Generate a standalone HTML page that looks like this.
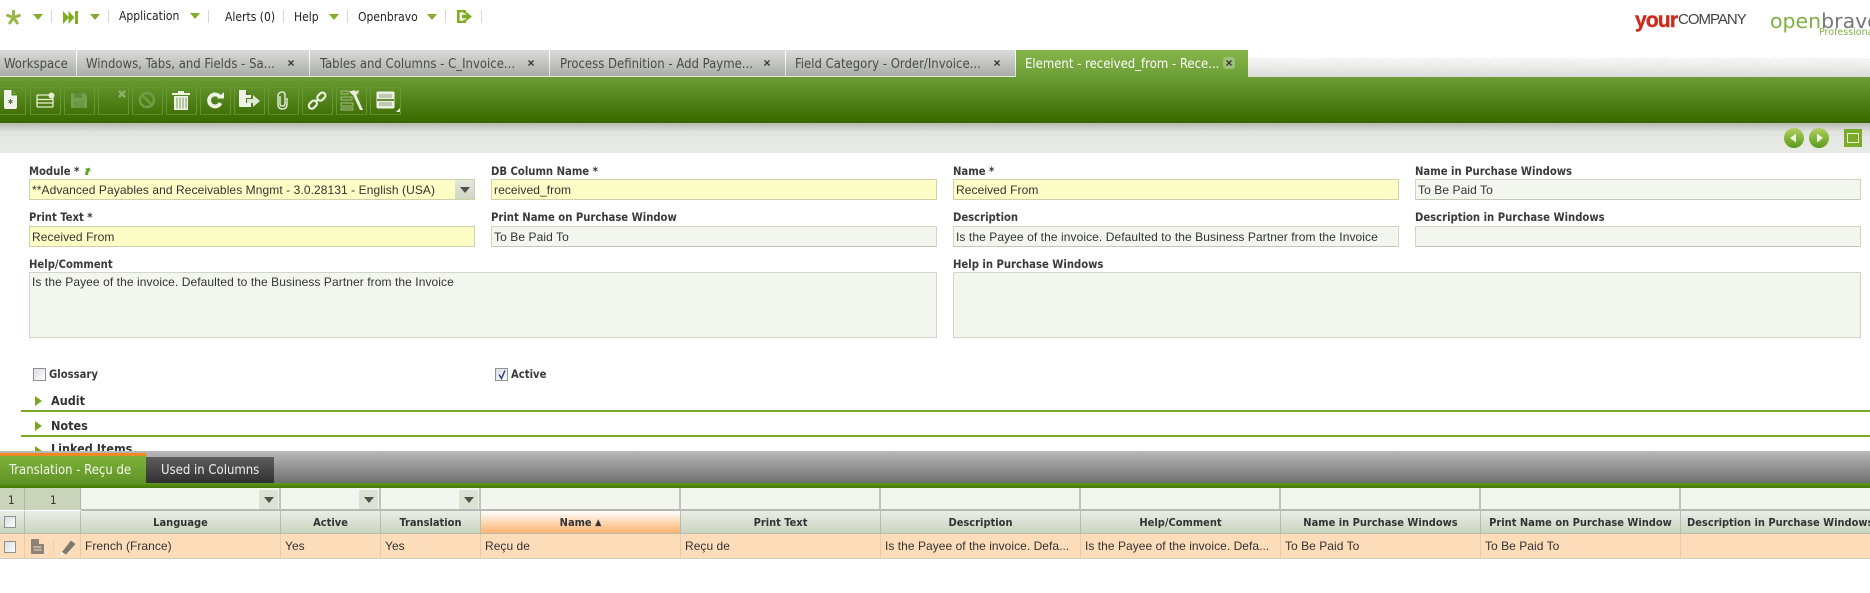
<!DOCTYPE html>
<html><head><meta charset="utf-8"><title>Element</title>
<style>
html,body{margin:0;padding:0;background:#fff}
#p{position:relative;width:1870px;height:593px;overflow:hidden;background:#fff;font-family:"DejaVu Sans Condensed","DejaVu Sans","Liberation Sans",sans-serif;font-stretch:condensed;color:#333}
#p div,#p span.a,#p svg{position:absolute}
.t{white-space:nowrap}
.nav{font-size:12px;color:#222;line-height:14px;height:14px;white-space:nowrap}
.sep{width:1px;top:10px;height:13px;background:#d8d8d8}
.tab{top:50px;height:26px;background:linear-gradient(#dcdcda,#a9aca6);border-bottom:1px solid #e6e8e2}
.tabt{top:56px;height:17px;line-height:17px;font-size:13px;color:#4a4a4a;white-space:nowrap}
.x{top:57px;width:12px;height:12px;font:bold 12px/12px "Liberation Sans",sans-serif;text-align:center;color:#333}
.btn{top:87px;height:26px;width:29px;border:1px solid #659832;border-bottom-color:#5c8c2c}
.lb{font-size:11.2px;font-weight:bold;color:#3a3a3a;line-height:16px;height:16px;white-space:nowrap}
.in{box-sizing:border-box;height:21px;border:1px solid #d2d6c4;border-bottom:1px solid #c4c8b8;font:12px/21px "Liberation Sans",sans-serif;letter-spacing:.08px;color:#333;padding-left:2px;white-space:nowrap;overflow:hidden}
.y{background:#fdfdc6;border-color:#cfd2a8}
.r{background:#f3f6ef}
.sec{font-size:12.5px;font-weight:bold;color:#333;line-height:16px;height:16px;white-space:nowrap}
.tri{width:0;height:0;border-left:7px solid #7aa824;border-top:5.5px solid transparent;border-bottom:5.5px solid transparent}
.gl{left:21px;right:0;height:2px;background:#7aa824}
.f{top:488px;height:21px;background:#f3f5ef;border-bottom:2px solid #b7bab0;border-right:2px solid #c0c3ba;box-sizing:content-box}
.h{top:511px;height:22px;background:linear-gradient(#ebede8,#c9d4bf);border-right:1px solid #b6bfad;border-bottom:1px solid #b7bdac;font-size:11px;font-weight:bold;color:#333;line-height:24px;text-align:center;white-space:nowrap;overflow:hidden}
.c{top:534px;height:24px;background:#fddcb9;border-right:1px solid #e4ccb0;border-bottom:1px solid #cfcdbd;font:12px/25px "Liberation Sans",sans-serif;letter-spacing:.04px;color:#333;white-space:nowrap;overflow:hidden;padding-left:4px;box-sizing:content-box}
.fb{top:490px;width:19px;height:19px;background:#dde2d5}
.ar{width:0;height:0;border-left:5px solid transparent;border-right:5px solid transparent;border-top:6px solid #4d5348}
.gar{width:0;height:0;border-left:5px solid transparent;border-right:5px solid transparent;border-top:6px solid #82ac2c}
.cb{box-sizing:border-box;width:12px;height:12px;border:1px solid #8e938e;background:linear-gradient(135deg,#d9dde4,#fff)}
</style></head><body>
<div id="p">

<!-- top bar -->
<svg style="left:5px;top:9px" width="17" height="17" viewBox="0 0 17 17"><g stroke="#9ab84a" stroke-width="3" stroke-linecap="round"><path d="M8.5 8.5V2.2M8.5 8.5L2.6 6.4M8.5 8.5L14.4 6.4M8.5 8.5L4.8 14M8.5 8.5L12.2 14"/></g></svg>
<div class="gar" style="left:33px;top:14px"></div>
<div class="sep" style="left:51px"></div>
<svg style="left:63px;top:11px" width="15" height="13" viewBox="0 0 15 13"><path d="M0 0L6 6.5L0 13ZM5.5 0L11.5 6.5L5.5 13ZM12 0H15V13H12Z" fill="#7fae22"/></svg>
<div class="gar" style="left:90px;top:14px"></div>
<div class="sep" style="left:108px"></div>
<div class="nav" style="left:119px;top:9px">Application</div>
<div class="gar" style="left:190px;top:13px"></div>
<div class="sep" style="left:208px"></div>
<div class="nav" style="left:225px;top:10px">Alerts (0)</div>
<div class="sep" style="left:283px"></div>
<div class="nav" style="left:294px;top:10px">Help</div>
<div class="gar" style="left:329px;top:14px"></div>
<div class="sep" style="left:347px"></div>
<div class="nav" style="left:358px;top:10px">Openbravo</div>
<div class="gar" style="left:427px;top:14px"></div>
<div class="sep" style="left:445px"></div>
<svg style="left:457px;top:10px" width="15" height="13" viewBox="0 0 15 13"><path d="M0 0H9V3.5H6.5V2.4H2.6V10.6H6.5V9.5H9V13H0Z" fill="#7fae22"/><path d="M5 4.6H9V1.8L15 6.5L9 11.2V8.4H5Z" fill="#7fae22"/></svg>
<div class="sep" style="left:481px"></div>

<!-- logos -->
<div class="t" style="left:1635px;top:8px;font:bold 21px/26px 'Liberation Sans',sans-serif;color:#cf2a1c;letter-spacing:-.8px;font-stretch:normal;-webkit-text-stroke:.4px #cf2a1c">your</div>
<div class="t" style="left:1678px;top:10px;font:15px/20px 'Liberation Sans',sans-serif;color:#444;letter-spacing:-1px;font-stretch:normal">COMPANY</div>
<div class="t" style="left:1770px;top:8px;font:20.5px/26px 'DejaVu Sans',sans-serif;font-stretch:normal;color:#7fb040;letter-spacing:0">open<span style="color:#777">bravo</span></div>
<div class="t" style="left:1819px;top:27px;font:9.5px/12px 'DejaVu Sans',sans-serif;font-stretch:normal;color:#88b04a">Professional</div>

<!-- hatch above toolbar -->
<div style="left:0;top:58px;width:1870px;height:19px;background:repeating-linear-gradient(45deg,rgba(150,150,150,.16) 0 1px,transparent 1px 2px),linear-gradient(#fff,#e2e3e0)"></div>

<!-- tabs -->
<div class="tab" style="left:0;width:76px"></div><div class="tabt" style="left:4px">Workspace</div>
<div class="tab" style="left:77px;width:232px"></div><div class="tabt" style="left:86px">Windows, Tabs, and Fields - Sa...</div><div class="x" style="left:285px">×</div>
<div class="tab" style="left:310px;width:239px"></div><div class="tabt" style="left:320px">Tables and Columns - C_Invoice...</div><div class="x" style="left:525px">×</div>
<div class="tab" style="left:550px;width:235px"></div><div class="tabt" style="left:560px">Process Definition - Add Payme...</div><div class="x" style="left:761px">×</div>
<div class="tab" style="left:786px;width:229px"></div><div class="tabt" style="left:795px">Field Category - Order/Invoice...</div><div class="x" style="left:991px">×</div>
<div class="tab" style="left:1016px;width:232px;height:27px;border:0;background:linear-gradient(#86b54a,#6c9f36)"></div><div class="tabt" style="left:1025px;color:#fff">Element - received_from - Rece...</div><div class="x" style="left:1223px;background:#9dbf78;border-radius:3px">×</div>

<!-- toolbar -->
<div style="left:0;top:77px;width:1870px;height:46px;background:linear-gradient(#6c9e36,#3c6c02 90%,#386600)"></div>
<div class="btn" style="left:-5px"></div>
<div class="btn" style="left:30px"></div>
<div class="btn" style="left:64px"></div>
<div class="btn" style="left:98px"></div>
<div class="btn" style="left:132px"></div>
<div class="btn" style="left:166px"></div>
<div class="btn" style="left:200px"></div>
<div class="btn" style="left:234px"></div>
<div class="btn" style="left:268px"></div>
<div class="btn" style="left:302px"></div>
<div class="btn" style="left:336px"></div>
<div class="btn" style="left:370px"></div>

<svg style="left:4px;top:90px" width="14" height="19" viewBox="0 0 14 19"><path d="M1 0H8L13 5V17Q13 19 11 19H2Q0 19 0 17V1Q0 0 1 0Z" fill="#f0f2ea"/><path d="M8 0V5H13" fill="#6a9a3a" stroke="#3c6c02" stroke-width=".8"/><path d="M6.5 9v5M4.4 10.3l4.2 2.4M8.6 10.3l-4.2 2.4" stroke="#56713a" stroke-width="1"/></svg>
<svg style="left:36px;top:92px" width="20" height="16" viewBox="0 0 20 16" fill="none"><path d="M15 3H2Q1 3 1 4V14Q1 15 2 15H16Q17 15 17 14V6M1 7.5H17M1 11H17" stroke="#e6efd4" stroke-width="1.3"/><circle cx="15.5" cy="3.5" r="3" fill="#e6efd4"/></svg>
<svg style="left:71px;top:92px" width="16" height="16" viewBox="0 0 16 16"><path d="M0 1H13L16 4V16H0Z" fill="#76a04c"/><rect x="3" y="1" width="8" height="5" fill="#5f8c35"/><rect x="3" y="9" width="10" height="7" fill="#6b9842"/></svg>
<svg style="left:117px;top:89px" width="10" height="10" viewBox="0 0 10 10"><path d="M2 2L8 8M8 2L2 8" stroke="#8eb06a" stroke-width="2.5"/></svg>
<svg style="left:138px;top:91px" width="18" height="18" viewBox="0 0 18 18" fill="none"><circle cx="9" cy="9" r="7" stroke="#709c44" stroke-width="2.6"/><path d="M4 4L14 14" stroke="#709c44" stroke-width="2.6"/></svg>
<svg style="left:172px;top:91px" width="18" height="19" viewBox="0 0 18 19"><path d="M0 2H6V0H12V2H18V4H0ZM2 5H16V19H2Z" fill="#eef1e6"/><path d="M5 6.5V17.5M8 6.5V17.5M11 6.5V17.5M14 6.5V17.5" stroke="#7c9a5e" stroke-width="1"/></svg>
<svg style="left:207px;top:92px" width="17" height="17" viewBox="0 0 17 17" fill="none"><path d="M13.5 11A6 6 0 1 1 13 5" stroke="#f0f3e8" stroke-width="3.8"/><path d="M10 6.5H17V0Z" fill="#f0f3e8"/></svg>
<svg style="left:239px;top:90px" width="21" height="19" viewBox="0 0 21 19"><path d="M0 0H7L12 5V8H7V13H12V17H1Q0 17 0 16Z" fill="#f0f2ea"/><path d="M7 0V5H12" fill="#4d7a18"/><path d="M8 9H14V5L21 11L14 17V13H8Z" fill="#dfe6d4"/></svg>
<svg style="left:276px;top:91px" width="13" height="19" viewBox="0 0 13 19" fill="none"><path d="M4 5V13Q4 15 6.500 15Q9 15 9 13V4Q9 1 6.500 1Q3 1 2 4V13Q2 18 6.500 18Q11 18 11 13V7" stroke="#dfe6d4" stroke-width="1.5"/></svg>
<svg style="left:306px;top:91px" width="22" height="20" viewBox="0 0 22 20" fill="none" stroke="#e8eedd" stroke-width="2.2"><rect x="-4" y="-3" width="9" height="6" rx="3" transform="translate(6.500 14) rotate(-45)"/><rect x="-4" y="-3" width="9" height="6" rx="3" transform="translate(15 6) rotate(-45)"/><path d="M9 11L13 8"/></svg>
<svg style="left:340px;top:90px" width="23" height="21" viewBox="0 0 23 21"><path d="M1 1H8V4H1ZM12 1H18V4H12ZM1 7H12V10H1ZM1 13H13V16H1ZM1 18H13V20H1Z" fill="none" stroke="#a2bd84" stroke-width=".9"/><path d="M9 1Q11 4 13 5L20 20H23L16 4Q19 3 19 0L16 2L14 0Q12 1 12 1" fill="#e8eedd"/></svg>
<svg style="left:376px;top:91px" width="24" height="22" viewBox="0 0 24 22"><rect x="1" y="1" width="17" height="16" rx="1" fill="#e9ede2" stroke="#f4f6ee"/><path d="M1 9H18" stroke="#3c6c02" stroke-width="1.400"/><rect x="3" y="3" width="13" height="4" fill="#bfc9b2"/><rect x="3" y="11" width="13" height="4" fill="#bfc9b2"/><path d="M24 17V21H20Z" fill="#e9ede2"/></svg>

<!-- strip below toolbar -->
<div style="left:0;top:123px;width:1870px;height:30px;background:repeating-linear-gradient(45deg,rgba(150,150,150,.13) 0 1px,transparent 1px 2px) 0 0/100% 13px no-repeat,linear-gradient(#b9bcb4,#e6e8e3 9px,#e8eae5)"></div>
<svg style="left:1783px;top:127px" width="22" height="22" viewBox="0 0 22 22"><defs><linearGradient id="g1" x1="0" y1="0" x2="0" y2="1"><stop offset="0" stop-color="#b0d060"/><stop offset="1" stop-color="#5b9a1a"/></linearGradient></defs><circle cx="11" cy="11" r="10" fill="url(#g1)"/><path d="M7 11L13 6.500V15.500Z" fill="#eef4dc"/></svg>
<svg style="left:1808px;top:127px" width="22" height="22" viewBox="0 0 22 22"><circle cx="11" cy="11" r="10" fill="url(#g1)"/><path d="M15 11L9 6.500V15.500Z" fill="#eef4dc"/></svg>
<div style="left:1844px;top:129px;width:18px;height:18px;background:#7aab29"></div>
<div style="left:1847px;top:133px;box-sizing:border-box;width:12px;height:10px;border:1px solid #eef4dc"></div>

<!-- form -->
<div class="lb" style="left:29px;top:164px">Module *</div>
<svg style="left:84px;top:167px" width="7" height="8" viewBox="0 0 7 8"><path d="M2 8V3H0L4 0L7 3H5V8Z" fill="#6aa12a" transform="rotate(20 3 4)"/></svg>
<div class="in y" style="left:29px;top:179px;width:446px">**Advanced Payables and Receivables Mngmt - 3.0.28131 - English (USA)</div>
<div style="left:455px;top:180px;width:19px;height:19px;background:linear-gradient(#e4e8dc,#cfd6c4)"></div>
<div class="ar" style="left:460px;top:187px"></div>
<div class="lb" style="left:491px;top:164px">DB Column Name *</div>
<div class="in y" style="left:491px;top:179px;width:446px">received_from</div>
<div class="lb" style="left:953px;top:164px">Name *</div>
<div class="in y" style="left:953px;top:179px;width:446px">Received From</div>
<div class="lb" style="left:1415px;top:164px">Name in Purchase Windows</div>
<div class="in r" style="left:1415px;top:179px;width:446px">To Be Paid To</div>

<div class="lb" style="left:29px;top:210px">Print Text *</div>
<div class="in y" style="left:29px;top:226px;width:446px">Received From</div>
<div class="lb" style="left:491px;top:210px">Print Name on Purchase Window</div>
<div class="in r" style="left:491px;top:226px;width:446px">To Be Paid To</div>
<div class="lb" style="left:953px;top:210px">Description</div>
<div class="in r" style="left:953px;top:226px;width:446px">Is the Payee of the invoice. Defaulted to the Business Partner from the Invoice</div>
<div class="lb" style="left:1415px;top:210px">Description in Purchase Windows</div>
<div class="in r" style="left:1415px;top:226px;width:446px"></div>

<div class="lb" style="left:29px;top:257px">Help/Comment</div>
<div class="in r" style="left:29px;top:272px;width:908px;height:66px;line-height:19px;border-color:#d2d6c8">Is the Payee of the invoice. Defaulted to the Business Partner from the Invoice</div>
<div class="lb" style="left:953px;top:257px">Help in Purchase Windows</div>
<div class="in r" style="left:953px;top:272px;width:908px;height:66px;border-color:#d2d6c8"></div>

<div class="cb" style="left:33px;top:368px;width:13px;height:13px"></div>
<div class="lb" style="left:49px;top:367px">Glossary</div>
<div class="cb" style="left:495px;top:368px;width:13px;height:13px"></div>
<svg style="left:497px;top:369px" width="10" height="11" viewBox="0 0 10 11"><path d="M2 5.500L4.500 9.500L8 1.500" fill="none" stroke="#333f80" stroke-width="1.500"/></svg>
<div class="lb" style="left:511px;top:367px">Active</div>

<div class="tri" style="left:35px;top:396px"></div>
<div class="sec" style="left:51px;top:393px">Audit</div>
<div class="gl" style="top:410px"></div>
<div class="tri" style="left:35px;top:421px"></div>
<div class="sec" style="left:51px;top:418px">Notes</div>
<div class="gl" style="top:435px"></div>
<div class="tri" style="left:35px;top:446px"></div>
<div class="sec" style="left:51px;top:441px">Linked Items</div>

<!-- lower tabs -->
<div style="left:0;top:451px;width:1870px;height:32px;background:linear-gradient(#b9b9b9,#6f6f6f)"></div>
<div style="left:0;top:453px;width:146px;height:30px;background:linear-gradient(#f08a24 0 3px,#7fb03c 3px,#5f9426)"></div>
<div class="t" style="left:9px;top:463px;font-size:13px;line-height:16px;color:#f4f8ea">Translation - Reçu de</div>
<div style="left:146px;top:457px;width:128px;height:26px;background:linear-gradient(#5e5e5e,#303030)"></div>
<div class="t" style="left:161px;top:463px;font-size:13px;line-height:16px;color:#eee">Used in Columns</div>
<div style="left:0;top:483px;width:1870px;height:5px;background:linear-gradient(#60961f,#427a06)"></div>

<!-- grid filter -->
<div style="left:0;top:488px;width:24px;height:22px;background:#c9d4bb;border-right:1px solid #aeb6a4"></div>
<div style="left:25px;top:488px;width:55px;height:22px;background:#c9d4bb;border-right:1px solid #aeb6a4"></div>
<div class="t" style="left:8px;top:493px;font-size:11.5px;line-height:14px;color:#333">1</div>
<div class="t" style="left:50px;top:493px;font-size:11.5px;line-height:14px;color:#333">1</div>
<div class="f" style="left:81px;width:198px"></div>
<div class="f" style="left:281px;width:98px"></div>
<div class="f" style="left:381px;width:98px"></div>
<div class="f" style="left:481px;width:198px"></div>
<div class="f" style="left:681px;width:198px"></div>
<div class="f" style="left:881px;width:198px"></div>
<div class="f" style="left:1081px;width:198px"></div>
<div class="f" style="left:1281px;width:198px"></div>
<div class="f" style="left:1481px;width:198px"></div>
<div class="f" style="left:1681px;width:198px"></div>
<div class="fb" style="left:259px"></div><div class="ar" style="left:264px;top:497px"></div>
<div class="fb" style="left:359px"></div><div class="ar" style="left:364px;top:497px"></div>
<div class="fb" style="left:459px"></div><div class="ar" style="left:464px;top:497px"></div>

<!-- grid header -->
<div class="h" style="left:0;width:24px"></div>
<div class="h" style="left:25px;width:55px"></div>
<div class="h" style="left:81px;width:199px">Language</div>
<div class="h" style="left:281px;width:99px">Active</div>
<div class="h" style="left:381px;width:99px">Translation</div>
<div class="h" style="left:481px;width:199px;background:linear-gradient(#fff,#fbb26c)">Name <span style="font-size:9px;vertical-align:1px">▲</span></div>
<div class="h" style="left:681px;width:199px">Print Text</div>
<div class="h" style="left:881px;width:199px">Description</div>
<div class="h" style="left:1081px;width:199px">Help/Comment</div>
<div class="h" style="left:1281px;width:199px">Name in Purchase Windows</div>
<div class="h" style="left:1481px;width:199px">Print Name on Purchase Window</div>
<div class="h" style="left:1681px;width:198px;text-align:left;padding-left:6px">Description in Purchase Windows</div>
<div class="cb" style="left:4px;top:516px"></div>

<!-- grid row -->
<div class="c" style="left:0;width:20px"></div>
<div class="c" style="left:25px;width:51px"></div>
<div class="c" style="left:81px;width:195px">French (France)</div>
<div class="c" style="left:281px;width:95px">Yes</div>
<div class="c" style="left:381px;width:95px">Yes</div>
<div class="c" style="left:481px;width:195px">Reçu de</div>
<div class="c" style="left:681px;width:195px">Reçu de</div>
<div class="c" style="left:881px;width:195px">Is the Payee of the invoice. Defa...</div>
<div class="c" style="left:1081px;width:195px">Is the Payee of the invoice. Defa...</div>
<div class="c" style="left:1281px;width:195px">To Be Paid To</div>
<div class="c" style="left:1481px;width:195px">To Be Paid To</div>
<div class="c" style="left:1681px;width:195px"></div>
<div class="cb" style="left:4px;top:541px"></div>
<svg style="left:31px;top:539px" width="13" height="15" viewBox="0 0 13 15"><path d="M1 0H8L13 5V14Q13 15 12 15H1Q0 15 0 14V1Q0 0 1 0Z" fill="#8a8478"/><path d="M2.500 8H10.500M2.500 11H10.500" stroke="#fddcb9" stroke-width="1"/><path d="M8 0V5H13" fill="#fddcb9"/></svg>
<div style="left:53px;top:540px;width:1px;height:14px;background:#eccdaa"></div>
<svg style="left:60px;top:540px" width="16" height="16" viewBox="0 0 16 16"><path d="M11 0.500L15.500 4L6 14.500L2 12Z" fill="#7d776c"/><path d="M2 12L0.500 15.500L4 14.500Z" fill="#fff"/></svg>
</div>
</body></html>
